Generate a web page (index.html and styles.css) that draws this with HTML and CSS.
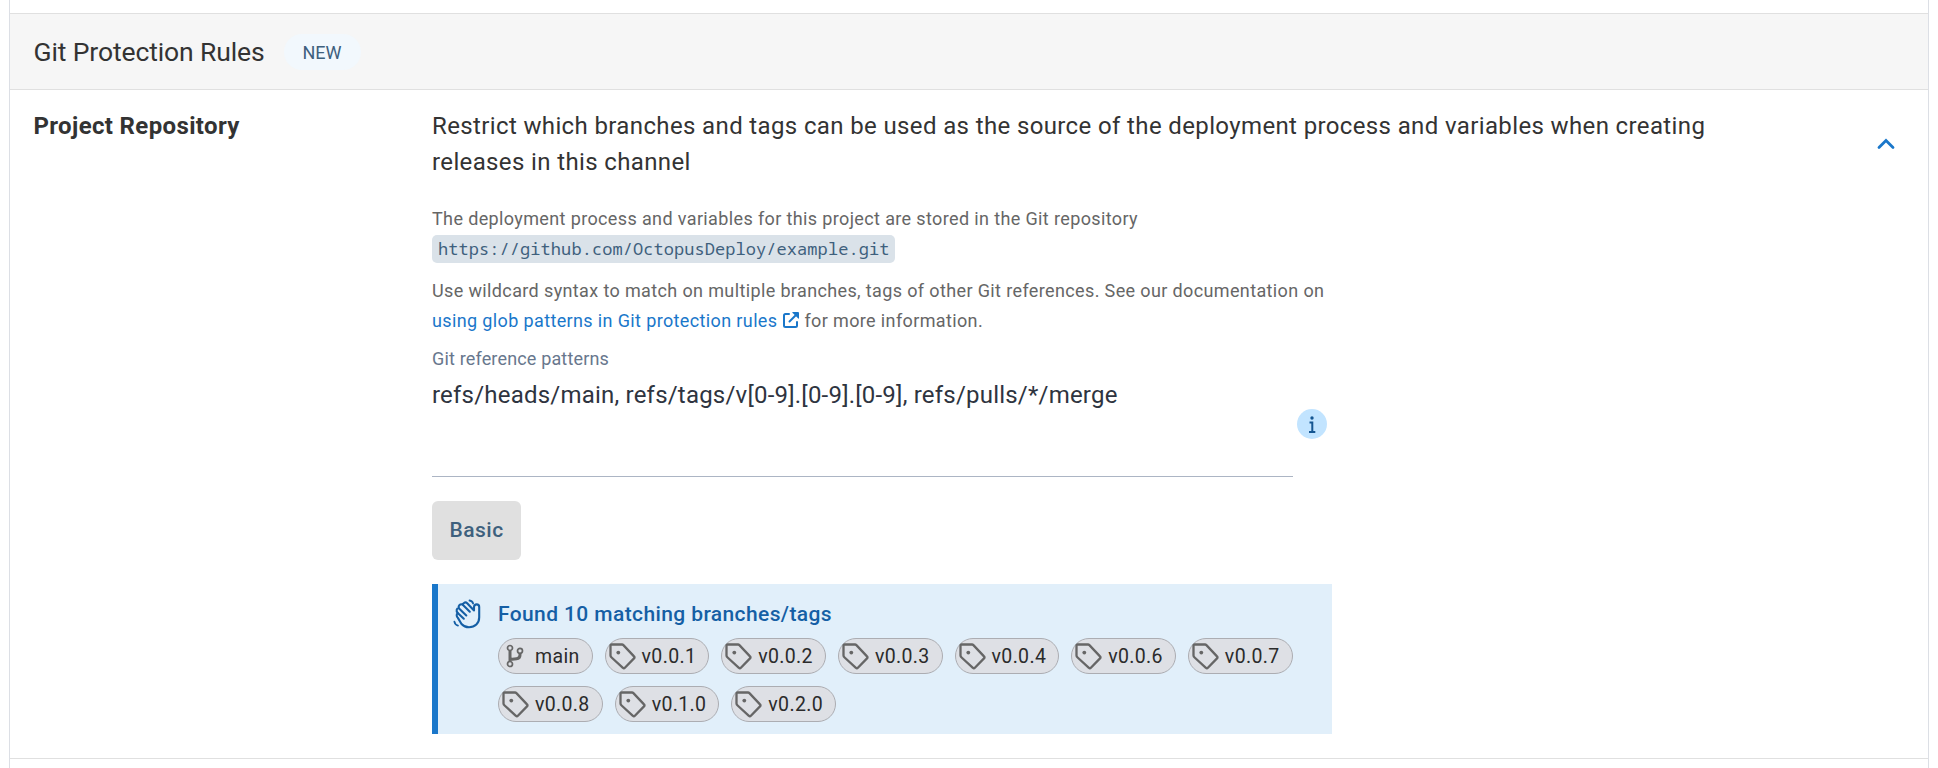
FILE: index.html
```html
<!DOCTYPE html>
<html lang="en">
<head>
<meta charset="utf-8">
<title>Git Protection Rules</title>
<link rel="stylesheet" href="styles.css">
</head>
<body>
<svg class="sprite" width="0" height="0" aria-hidden="true">
  <symbol id="tag" viewBox="0 0 28 28">
    <path d="M2.500 3.500q0-1 1-1H14q.8 0 1.400.6L26 14.400q1 1 0 2l-9.100 9.400q-1 1-2 0L3.600 15.500q-1.100-1-1.100-2z" fill="none" stroke="currentColor" stroke-width="2.300" stroke-linejoin="round"/>
    <circle cx="10.300" cy="10.600" r="1.900" fill="currentColor"/>
  </symbol>
</svg>
<main class="card">
  <header class="section-header">
    <h1 class="section-title">Git Protection Rules</h1>
    <span class="badge">NEW</span>
  </header>
  <section class="row">
    <h2 class="row-label">Project Repository</h2>
    <div class="row-body">
      <p class="summary">Restrict which branches and tags can be used as the source of the deployment process and variables when creating releases in this channel</p>
      <div class="details">
        <p class="note">The deployment process and variables for this project are stored in the Git repository<br><code class="repo">https://github.com/OctopusDeploy/example.git</code></p>
        <p class="note wild">Use wildcard syntax to match on multiple branches, tags of other Git references. See our documentation on<br><a class="link">using glob patterns in Git protection rules<svg class="ext" viewBox="0 0 16 16"><path d="M6 2H2.500Q1 2 1 3.500v10Q1 15 2.500 15h10q1.500 0 1.500-1.500V10" fill="none" stroke="currentColor" stroke-width="2" stroke-linecap="round"/><path d="M6.500 9.500l6.500-6.500" fill="none" stroke="currentColor" stroke-width="2" stroke-linecap="round"/><path d="M9.800 0H15q1 0 1 1v5.200q0 .8-.7.300L9.400.8Q9 0 9.800 0z" fill="currentColor"/></svg></a>for more information.</p>
        <div class="field">
          <div class="input">
            <label class="field-label">Git reference patterns</label>
            <div class="field-value">refs/heads/main, refs/tags/v[0-9].[0-9].[0-9], refs/pulls/*/merge</div>
          </div>
          <svg class="info" viewBox="0 0 30 30"><circle cx="15" cy="15" r="15" fill="#c2e4ff"/><circle cx="15" cy="9" r="1.700" fill="#155692"/><path d="M12.500 13.600h2.800v9.200M12 23.100h6.300" fill="none" stroke="#155692" stroke-width="2"/></svg>
        </div>
        <button class="basic">Basic</button>
        <div class="callout">
          <svg class="wave" viewBox="0 0 30 30" fill="none" stroke="currentColor" stroke-width="2.100" stroke-linecap="round" stroke-linejoin="round">
            <path d="M20.500 11L14.200 4.200q-1.600-1.500-3.200-.2-1 .8-1.500 1.500-1.800-.6-3 .6t-.8 2.900q-1.600.3-2 1.800t1 3.200q-1.200 1-1 2.600.2 1.200 1.200 2.300L8.500 25q3 3.300 7.500 3.300c6 0 10.200-4 10.200-10V8q0-2.600-2.500-2.600T21 8v3.500"/>
            <path d="M9.500 5.500l7.300 7.200M5.800 9.200l7.500 7.200M5 14.200l5.800 5.500"/>
            <path d="M16.500 1.500q3 .4 3.600 3M1.400 22.600q.6 3.200 3.600 4" stroke-width="1.800"/>
          </svg>
          <div class="callout-body">
            <h3 class="callout-title">Found 10 matching branches/tags</h3>
            <div class="chips">
              <span class="chip branch"><svg class="branch-icon" viewBox="0 0 18 24" fill="none" stroke="currentColor"><circle cx="4" cy="4" r="2.500" stroke-width="1.700"/><circle cx="14" cy="6.800" r="2.500" stroke-width="1.700"/><circle cx="4" cy="20" r="2.500" stroke-width="1.700"/><path d="M4 7v10.500M14 9.800v1.200q0 3.400-3.400 3.700L4 15.500" stroke-width="3"/></svg>main</span>
              <span class="chip"><svg class="tag-icon"><use href="#tag"/></svg>v0.0.1</span>
              <span class="chip"><svg class="tag-icon"><use href="#tag"/></svg>v0.0.2</span>
              <span class="chip"><svg class="tag-icon"><use href="#tag"/></svg>v0.0.3</span>
              <span class="chip"><svg class="tag-icon"><use href="#tag"/></svg>v0.0.4</span>
              <span class="chip"><svg class="tag-icon"><use href="#tag"/></svg>v0.0.6</span>
              <span class="chip"><svg class="tag-icon"><use href="#tag"/></svg>v0.0.7</span>
              <span class="chip"><svg class="tag-icon"><use href="#tag"/></svg>v0.0.8</span>
              <span class="chip"><svg class="tag-icon"><use href="#tag"/></svg>v0.1.0</span>
              <span class="chip"><svg class="tag-icon"><use href="#tag"/></svg>v0.2.0</span>
            </div>
          </div>
        </div>
      </div>
    </div>
    <svg class="chevron" viewBox="0 0 18 12"><path d="M2 9.500L9 2.500l7 7" fill="none" stroke="#1a77ca" stroke-width="2.800" stroke-linecap="round" stroke-linejoin="miter"/></svg>
  </section>
</main>
</body>
</html>
```
FILE: styles.css
```css
* { box-sizing: border-box; }
body {
  margin: 0;
  height: 768px;
  overflow: hidden;
  background: #fff;
  color: #333;
  font-family: Roboto, sans-serif;
}
h1, h2, h3, p { margin: 0; }
.sprite { display: none; }
.card {
  height: 768px;
  margin: 0 9px;
  border-left: 1px solid #dcdfe5;
  border-right: 1px solid #dcdfe5;
  padding-top: 13px;
}
.section-header {
  display: flex;
  align-items: center;
  gap: 19px;
  height: 77px;
  padding: 0 23.5px;
  background: #f6f6f6;
  border-top: 1px solid #e0e0e0;
  border-bottom: 1px solid #e0e0e0;
}
.section-title { font-size: 26.5px; font-weight: 400; line-height: 36px; letter-spacing: -0.12px; }
.badge {
  height: 36px;
  padding: 0 19px;
  border-radius: 18px;
  background: #f2f8fd;
  color: #3e607d;
  font-size: 18px;
  line-height: 37px;
}
.row {
  display: flex;
  height: 669px;
  padding: 18px 0 0 23.5px;
  border-bottom: 1px solid #e0e0e0;
}
.row-label { width: 398.5px; font-size: 24px; font-weight: 700; line-height: 36px; letter-spacing: 0.36px; }
.row-body { width: 1300px; }
.summary { font-size: 24px; line-height: 36px; letter-spacing: 0.37px; }
.details { width: 900px; padding-top: 24px; }
.note { height: 60px; color: #666; font-size: 18px; line-height: 30px; letter-spacing: 0.37px; white-space: nowrap; }
.wild { margin-top: 12px; }
.repo {
  display: inline-block;
  height: 28px;
  padding: 0 6px;
  border-radius: 5px;
  background: #dae2e9;
  color: #3e607d;
  font-family: "Noto Sans Mono", "DejaVu Sans Mono", monospace;
  font-size: 17px;
  line-height: 28px;
  letter-spacing: 0.06px;
}
.link { color: #1a77ca; }
.ext { width: 16px; height: 16px; margin: 0 5px 0 6px; vertical-align: -1px; }
.field { display: flex; justify-content: space-between; align-items: center; padding: 8px 5px 0 0; }
.input { width: 861px; height: 133px; border-bottom: 1px solid #acb5c4; }
.field-label { display: block; color: #68778d; font-size: 18px; line-height: 30px; letter-spacing: 0.16px; }
.field-value { padding-top: 6px; color: #2e3440; font-size: 24px; line-height: 30px; letter-spacing: 0.21px; }
.info { width: 30px; height: 30px; margin-top: 27px; }
.basic {
  display: block;
  width: 89px;
  height: 59px;
  margin-top: 24px;
  padding: 0;
  border: 0;
  border-radius: 6px;
  background: #e0e0e0;
  color: #3e607d;
  font: 500 21px/59px Roboto, sans-serif;
  letter-spacing: 0.5px;
}
.callout {
  display: flex;
  width: 900px;
  height: 150px;
  margin-top: 24px;
  border-left: 6px solid #1a77ca;
  background: #e1effa;
}
.wave { width: 30px; height: 30px; margin: 15px 15px 0; color: #155fa5; }
.callout-title { padding-top: 14px; color: #155fa5; font-size: 21px; font-weight: 500; line-height: 32px; letter-spacing: 0.39px; }
.chips { display: flex; flex-wrap: wrap; gap: 12px; padding-top: 8px; width: 810px; }
.chip {
  display: flex;
  align-items: center;
  height: 36px;
  padding: 0 12px 0 2px;
  border: 1px solid #acadb2;
  border-radius: 18px;
  background: #dee0e5;
  color: #2b2b2b;
  font-size: 19.5px;
  letter-spacing: 0.34px;
}
.tag-icon { width: 28px; height: 28px; margin-right: 6px; color: #666; }
.branch-icon { width: 18px; height: 24px; margin: 0 11px 0 5px; color: #666; }
.chevron { width: 18px; height: 12px; margin: 30px 0 0 145px; }
```
